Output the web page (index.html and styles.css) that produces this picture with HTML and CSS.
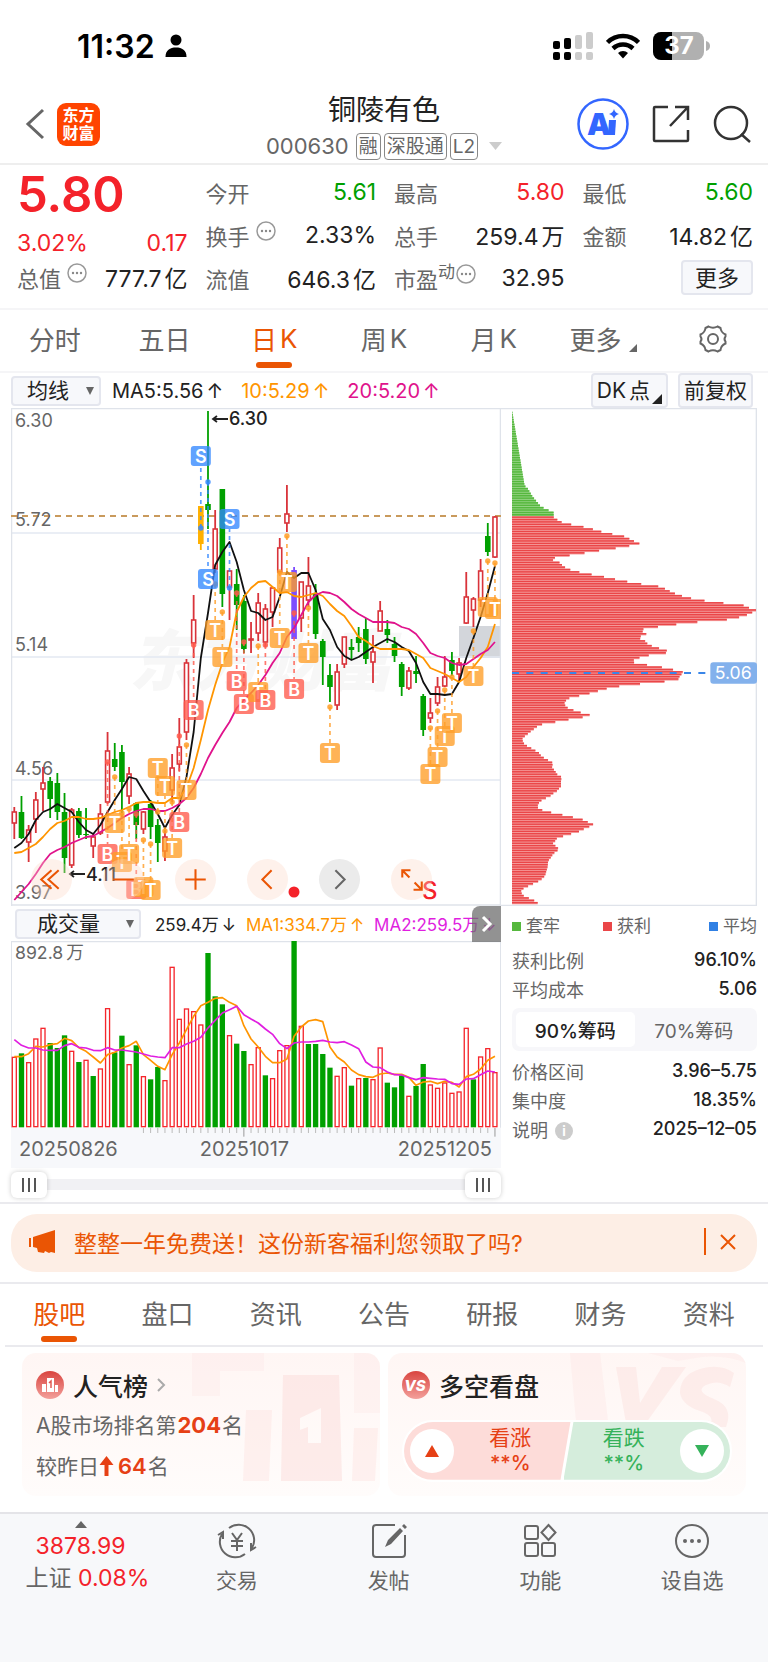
FILE: index.html
```html
<!DOCTYPE html>
<html lang="zh">
<head>
    <meta charset="UTF-8">
    <meta name="viewport" content="width=device-width, initial-scale=1.0">
    <title>铜陵有色 000630</title>
    <link rel="stylesheet" href="styles.css">
</head>
<body>
    <div class="status-bar">
        <div class="status-time">
            <span>11:32</span>
            <svg width="22" height="24" viewBox="0 0 22 24"><circle cx="11" cy="6" r="5.5"/><path d="M0.5 23C0.5 16 5 13.5 11 13.5S21.500 16 21.500 23Z"/></svg>
        </div>
        <div class="status-icons">
            <svg width="40" height="28" viewBox="0 0 40 28">
                <rect x="0" y="9" width="7" height="8" rx="2"/><rect x="11" y="6" width="7" height="11" rx="2"/>
                <rect x="22" y="3" width="7" height="14" rx="2" fill="#ccc"/><rect x="33" y="0" width="7" height="17" rx="2" fill="#ccc"/>
                <rect x="0" y="20" width="7" height="8" rx="2"/><rect x="11" y="20" width="7" height="8" rx="2"/>
                <rect x="22" y="20" width="7" height="8" rx="2" fill="#ccc"/><rect x="33" y="20" width="7" height="8" rx="2" fill="#ccc"/>
            </svg>
            <svg width="34" height="26" viewBox="0 0 34 26" fill="none" stroke="#000" stroke-width="4.500">
                <path d="M1.500 9.500a22 22 0 0 1 31 0M7 15.500a14.500 14.500 0 0 1 20 0"/><path d="M17 25.500l-5-5.500a7 7 0 0 1 10 0z" fill="#000" stroke="none"/>
            </svg>
            <svg width="57" height="28" viewBox="0 0 57 28">
                <clipPath id="battery"><rect width="51" height="28" rx="8"/></clipPath>
                <g clip-path="url(#battery)"><rect width="51" height="28" fill="#b0b0b0"/><rect width="19" height="28"/></g>
                <path d="M53 9q4 1 4 5t-4 5z" fill="#b0b0b0"/>
                <text x="26" y="22" text-anchor="middle" class="battery-text">37</text>
            </svg>
        </div>
    </div>

    <header class="header">
        <div class="header-left">
            <button class="icon-btn" aria-label="返回"><svg width="20" height="32" viewBox="0 0 20 32" fill="none" stroke="#666" stroke-width="3"><path d="M18 2L3 16l15 14"/></svg></button>
            <div class="logo">东方<br>财富</div>
        </div>
        <div class="header-title">
            <h1>铜陵有色</h1>
            <div class="code">
                <span class="code-num">000630</span>
                <span class="tag">融</span><span class="tag">深股通</span><span class="tag">L2</span>
                <svg class="code-arrow" width="13" height="8" viewBox="0 0 13 8"><path d="M0 0h13L6.500 8z" fill="#ccc"/></svg>
            </div>
        </div>
        <div class="header-right">
            <button class="icon-btn" aria-label="AI">
                <svg width="52" height="52" viewBox="0 0 52 52">
                    <circle cx="26" cy="26" r="24.500" fill="#fff" stroke="#36f" stroke-width="2.500"/>
                    <text x="10" y="37" class="ai-text">A</text>
                    <path d="M32 22h7l-1 15h-7z" fill="#36f"/>
                    <path d="M37 11q1 4 5 5q-4 1-5 5q-1-4-5-5q4-1 5-5z" fill="#36f"/>
                </svg>
            </button>
            <button class="icon-btn" aria-label="分享"><svg width="38" height="38" viewBox="0 0 38 38" fill="none" stroke="#333" stroke-width="2.500"><path d="M16 2H3a1 1 0 0 0-1 1v32a1 1 0 0 0 1 1h32a1 1 0 0 0 1-1V25M23 2h13v13M36 2L18 21"/></svg></button>
            <button class="icon-btn" aria-label="搜索"><svg width="38" height="38" viewBox="0 0 38 38" fill="none" stroke="#333" stroke-width="2.500"><circle cx="18" cy="18" r="16"/><path d="M28 29l9 8"/></svg></button>
        </div>
    </header>

    <section class="quote">
        <div class="quote-col price-col">
            <div class="price">5.80</div>
            <div class="item up"><span>3.02%</span><span>0.17</span></div>
            <div class="item"><span class="label">总值<svg class="more-dot" viewBox="0 0 20 20"><use href="#dots"/></svg></span><span>777.7<em>亿</em></span></div>
        </div>
        <div class="quote-col">
            <div class="item"><span class="label">今开</span><span class="down">5.61</span></div>
            <div class="item"><span class="label">换手<svg class="more-dot" viewBox="0 0 20 20"><use href="#dots"/></svg></span><span>2.33%</span></div>
            <div class="item"><span class="label">流值</span><span>646.3<em>亿</em></span></div>
        </div>
        <div class="quote-col">
            <div class="item"><span class="label">最高</span><span class="up">5.80</span></div>
            <div class="item"><span class="label">总手</span><span>259.4<em>万</em></span></div>
            <div class="item"><span class="label">市盈<small>动</small><svg class="more-dot tight" viewBox="0 0 20 20"><use href="#dots"/></svg></span><span>32.95</span></div>
        </div>
        <div class="quote-col">
            <div class="item"><span class="label">最低</span><span class="down">5.60</span></div>
            <div class="item"><span class="label">金额</span><span>14.82<em>亿</em></span></div>
            <div class="item end"><button class="box-btn more-btn">更多</button></div>
        </div>
    </section>

    <nav class="tabs period-tabs">
        <button class="tab">分时</button>
        <button class="tab">五日</button>
        <button class="tab active">日<em>K</em></button>
        <button class="tab">周<em>K</em></button>
        <button class="tab">月<em>K</em></button>
        <button class="tab">更多<svg class="corner" width="8" height="8" viewBox="0 0 8 8"><path d="M8 0v8H0z" fill="#666"/></svg></button>
        <button class="tab" aria-label="设置"><svg width="30" height="30" viewBox="0 0 30 30" fill="none" stroke="#666" stroke-width="2"><path d="M10.500 2.500q4.500 2.500 9 0l3 1.500q.5 4.500 5 6.500v2q-2 2.500 0 5v2q-4.500 2-5 6.500l-3 1.500q-4.500-2.500-9 0l-3-1.500q-.5-4.500-5-6.500v-2q2-2.500 0-5v-2q4.500-2 5-6.500z"/><circle cx="15" cy="15" r="5"/></svg></button>
    </nav>

    <div class="ma-bar">
        <div class="select-wrap ma-select"><select aria-label="指标"><option>均线</option></select></div>
        <span>MA5:5.56<em>↑</em></span>
        <span class="c-orange">10:5.29<em>↑</em></span>
        <span class="c-pink">20:5.20<em>↑</em></span>
        <div class="ma-btns">
            <button class="box-btn dk-btn">DK<em>点</em><svg class="dk-corner" width="10" height="10" viewBox="0 0 10 10"><path d="M10 0v10H0z" fill="#222"/></svg></button>
            <button class="box-btn">前复权</button>
        </div>
    </div>

    <main class="charts">
        <div class="left">
            <div class="kline">
                <svg id="kline" viewBox="0 0 490 498"></svg>
                <div class="chart-tools">
                    <button aria-label="最左"><svg viewBox="0 0 40 40"><path d="M20 11l-10 9 10 9M27 11l-10 9 10 9"/></svg></button>
                    <button aria-label="缩小"><svg viewBox="0 0 40 40"><path d="M10 20h20"/></svg></button>
                    <button aria-label="放大"><svg viewBox="0 0 40 40"><path d="M10 20h20M20 10v20"/></svg></button>
                    <button aria-label="左移"><svg viewBox="0 0 40 40"><path d="M24 11l-9 9 9 9"/></svg></button>
                    <button aria-label="右移" class="gray"><svg viewBox="0 0 40 40"><path d="M16 11l9 9-9 9"/></svg></button>
                    <button aria-label="全屏"><svg viewBox="0 0 40 40"><path d="M11 18v-7h8M11 11l7 7M30 22v8h-8M30 30l-7-7"/></svg></button>
                </div>
            </div>
            <div class="vol-bar">
                <div class="select-wrap vol-select"><select aria-label="副图指标"><option>成交量</option></select></div>
                <span>259.4万<em>↓</em></span>
                <span class="c-orange">MA1:334.7万<em>↑</em></span>
                <span class="c-purple">MA2:259.5万<em>↓</em></span>
                <button class="vol-next" aria-label="展开"><svg width="12" height="18" viewBox="0 0 12 18" fill="none" stroke="#fff" stroke-width="3"><path d="M2 2l7 7-7 7"/></svg></button>
            </div>
            <svg id="volume" viewBox="0 0 1470 560"></svg>
            <div class="axis">
                <svg id="ticks" viewBox="0 0 1470 27"></svg>
                <div class="axis-labels"><span>20250826</span><span>20251017</span><span>20251205</span></div>
            </div>
            <div class="range">
                <input type="range" min="0" max="100" value="0" aria-label="起始日期">
                <input type="range" min="0" max="100" value="100" aria-label="结束日期">
            </div>
        </div>
        <div class="right">
            <svg id="chips" viewBox="0 0 768 1494"></svg>
            <div class="chip-info">
                <div class="legend"><span class="green">套牢</span><span class="red">获利</span><span class="blue">平均</span></div>
                <div class="row"><span>获利比例</span><b>96.10%</b></div>
                <div class="row"><span>平均成本</span><b>5.06</b></div>
                <div class="segment"><button class="on">90%筹码</button><button>70%筹码</button></div>
                <div class="row"><span>价格区间</span><b>3.96–5.75</b></div>
                <div class="row"><span>集中度</span><b>18.35%</b></div>
                <div class="row"><span>说明<i class="info">i</i></span><b>2025–12–05</b></div>
            </div>
        </div>
    </main>

    <div class="banner-wrap">
        <div class="banner">
            <svg width="28" height="24" viewBox="0 0 28 24" fill="#ea5504"><path d="M0 8h2v9H0zM4 7L26 0v23l-4-1-2 1-4-2-1 2-6-1-1-4-4-1z"/></svg>
            <span>整整一年免费送！这份新客福利您领取了吗?</span>
            <button class="banner-close" aria-label="关闭"><svg width="16" height="16" viewBox="0 0 16 16" fill="none" stroke="#ea5504" stroke-width="2"><path d="M1 1l14 14M15 1L1 15"/></svg></button>
        </div>
    </div>

    <nav class="tabs info-tabs">
        <button class="tab active">股吧</button>
        <button class="tab">盘口</button>
        <button class="tab">资讯</button>
        <button class="tab">公告</button>
        <button class="tab">研报</button>
        <button class="tab">财务</button>
        <button class="tab">资料</button>
    </nav>

    <section class="cards">
        <div class="card">
            <svg class="card-bg" viewBox="0 0 188 143" fill="#fbdcda">
                <path d="M0 0h72v18H28v25H0z" opacity=".2"/><path d="M54 57h26l-3 71H51zM162 75h24l-3 53h-23z" opacity=".35"/>
                <path d="M91 22h56l3 106h-61zM108 65v12l8-3v16h13V55z" fill-rule="evenodd" opacity=".5"/><path d="M162 0h26v60h-26z" opacity=".2"/>
            </svg>
            <h2>
                <svg width="28" height="28" viewBox="0 0 28 28"><circle cx="14" cy="14" r="14" fill="url(#redGrad)"/><path d="M6 13h4v8H6zM11 7h7v14h-7zM19 14h3v7h-3z" fill="#fff"/><path d="M13 12l2-2v7" stroke="#e05a52" fill="none" stroke-width="1.500"/></svg>
                人气榜
                <svg width="9" height="14" viewBox="0 0 9 14" fill="none" stroke="#aaa" stroke-width="2"><path d="M1 1l6 6-6 6"/></svg>
            </h2>
            <p>A股市场排名第<b>204</b>名</p>
            <p>较昨日<svg width="15" height="20" viewBox="0 0 14 20"><path d="M7 0l7 9H9v11H5V9H0z" fill="#e64015"/></svg><b class="rise">64</b>名</p>
        </div>
        <div class="card">
            <svg class="card-bg" viewBox="0 0 188 143" fill="#fbdcda">
                <path d="M12 0h30l8 68H18z" opacity=".25"/>
                <path d="M58 14h20l4 36 22-36h24L88 70H68z" opacity=".4"/>
                <path d="M176 20q-14-10-34-4t-20 24q2 12 20 18t8 16h18q8-20-12-28t-8-14 24 2z" opacity=".4"/>
                <path d="M90 0h98v10q-20-8-44-6l-24 4z" opacity=".2"/>
            </svg>
            <h2>
                <svg width="28" height="28" viewBox="0 0 28 28"><circle cx="14" cy="14" r="14" fill="url(#redGrad)"/><text x="13" y="20" text-anchor="middle" class="vs-text">VS</text></svg>
                多空看盘
            </h2>
            <div class="vote">
                <button class="vote-up"><i><svg width="14" height="12" viewBox="0 0 14 12"><path d="M7 0l7 12H0z" fill="#e64015"/></svg></i><span>看涨<br><small>**%</small></span></button>
                <button class="vote-down"><span>看跌<br><small>**%</small></span><i><svg width="14" height="12" viewBox="0 0 14 12"><path d="M0 0h14L7 12z" fill="#35b25a"/></svg></i></button>
            </div>
        </div>
    </section>

    <footer class="bottom-bar">
        <a class="index" href="#">
            <svg width="12" height="7" viewBox="0 0 12 7"><path d="M6 0l6 7H0z" fill="#666"/></svg>
            <span class="up">3878.99</span>
            <span class="index-name">上证 <span class="up">0.08%</span></span>
        </a>
        <a href="#"><svg viewBox="0 0 40 36" width="40" height="36"><path d="M12 5a15.500 15.500 0 0 1 23 20M28 31a15.500 15.500 0 0 1-23-20M1 12l5-3v7M39 24l-5 3v-7M15 10l5 7 5-7M20 17v11M14 18h12M14 23h12"/></svg>交易</a>
        <a href="#"><svg viewBox="0 0 36 36" width="36" height="36"><path d="M24 2H5a3 3 0 0 0-3 3v26a3 3 0 0 0 3 3h26a3 3 0 0 0 3-3V12"/><path d="M14 24l3-7L29 5l3 3-12 13zM31 3l2-2 3 3-2 2z" fill="#666" stroke="none"/></svg>发帖</a>
        <a href="#"><svg viewBox="0 0 36 36" width="36" height="36"><rect x="3" y="3" width="13" height="13" rx="2"/><rect x="3" y="20" width="13" height="13" rx="2"/><rect x="20" y="20" width="13" height="13" rx="2"/><path d="M26.500 2l7 7.500-7 7.500-7-7.500z"/></svg>功能</a>
        <a href="#"><svg viewBox="0 0 36 36" width="36" height="36"><circle cx="18" cy="18" r="16"/><g fill="#666" stroke="none"><circle cx="11" cy="18" r="2"/><circle cx="18" cy="18" r="2"/><circle cx="25" cy="18" r="2"/></g></svg>设自选</a>
    </footer>

    <svg class="defs" width="0" height="0">
        <linearGradient id="redGrad" x1="0" y1="0" x2="0" y2="1"><stop offset="0" stop-color="#d9443f"/><stop offset="1" stop-color="#f3a09b"/></linearGradient>
        <g id="dots"><circle cx="10" cy="10" r="9" fill="none" stroke="#999" stroke-width="1.500"/><g fill="#888"><circle cx="6" cy="10" r="1.200"/><circle cx="10" cy="10" r="1.200"/><circle cx="14" cy="10" r="1.200"/></g></g>
    </svg>
    <script src="chart.js"></script>
</body>
</html>
```

FILE: styles.css
```css
* {
    box-sizing: border-box;
}
body {
    margin: 0;
    font-family: Inter, "Noto Sans CJK SC", sans-serif;
    font-size: 22px;
    color: #222;
    background: #fff;
}
button, select {
    font-family: inherit;
    color: inherit;
    border: none;
    background: none;
    padding: 0;
    cursor: pointer;
}
h1, h2, p {
    margin: 0;
}
svg {
    flex: none;
}
em {
    margin-left: 3px;
    font-style: normal;
}
.up { color: #f4222a; }
.down { color: #00a000; }
.c-orange { color: #ff9500; }
.c-pink { color: #e0138c; }
.c-purple { color: #e01ee0; }

/* 状态栏 */
.status-bar {
    display: flex;
    justify-content: space-between;
    align-items: center;
    height: 92px;
    padding: 0 58px 0 77px;
}
.status-time {
    display: flex;
    align-items: center;
    gap: 10px;
    font-size: 32px;
    font-weight: 600;
    color: #000;
}
.status-icons {
    display: flex;
    align-items: center;
    gap: 13px;
}
.battery-text {
    font-size: 24px;
    font-weight: 700;
    fill: #fff;
}

/* 头部 */
.header {
    display: grid;
    grid-template-columns: 1fr auto 1fr;
    align-items: center;
    height: 73px;
    padding: 0 17px;
    border-bottom: 2px solid #eee;
}
.header-left, .header-right {
    display: flex;
    align-items: center;
    gap: 12px;
    padding: 0 0 8px 8px;
}
.header-right {
    justify-content: flex-end;
    gap: 23px;
}
.icon-btn {
    display: flex;
}
.logo {
    width: 43px;
    height: 43px;
    padding-top: 3px;
    border-radius: 9px;
    background: #ff4400;
    color: #fff;
    font-size: 16px;
    font-weight: 700;
    line-height: 18px;
    text-align: center;
}
.header-title {
    text-align: center;
}
.header-title h1 {
    font-size: 28px;
    font-weight: 400;
    line-height: 36px;
}
.code {
    display: flex;
    align-items: center;
    gap: 3px;
    height: 36px;
    font-size: 22px;
    color: #666;
}
.code-num {
    margin-right: 4px;
}
.tag {
    height: 27px;
    padding: 0 2px;
    border: 1px solid #888;
    border-radius: 4px;
    font-size: 19px;
    line-height: 25px;
}
.code-arrow {
    margin-left: 8px;
}
.ai-text {
    font-size: 30px;
    font-weight: 900;
    fill: #3366ff;
}

/* 行情 */
.quote {
    display: grid;
    grid-template-columns: repeat(4, 1fr);
    column-gap: 18px;
    height: 145px;
    padding: 5px 15px 0 17px;
    border-bottom: 2px solid #f5f5f7;
}
.item {
    display: flex;
    justify-content: space-between;
    align-items: center;
    height: 43px;
    font-size: 23px;
}
.price-col {
    display: grid;
    grid-template-rows: 50px 46px 22px;
}
.price-col .item {
    height: auto;
}
.price {
    font-size: 49px;
    font-weight: 600;
    line-height: 50px;
    color: #f4222a;
}
.label {
    display: flex;
    align-items: center;
    font-size: 22px;
    color: #666;
}
.label small {
    align-self: flex-start;
    font-size: 17px;
    line-height: 20px;
}
.more-dot {
    width: 20px;
    height: 20px;
    margin: 0 0 8px 6px;
}
.more-dot.tight {
    margin-left: 1px;
}
.item.end {
    justify-content: flex-end;
}
.box-btn {
    height: 35px;
    padding: 0 4px;
    border: 2px solid #e4e6ee;
    border-radius: 4px;
    background: #f7f8fb;
    font-size: 21px;
    line-height: 30px;
}
.more-btn {
    padding: 0 12px;
    font-size: 22px;
}

/* 标签页 */
.tabs {
    display: grid;
    grid-template-columns: repeat(7, 1fr);
    border-bottom: 2px solid #f5f5f7;
}
.tab {
    position: relative;
    display: flex;
    justify-content: center;
    align-items: center;
    height: 61px;
    padding-bottom: 4px;
    font-size: 26px;
    color: #666;
}
.tab.active {
    color: #ea5504;
}
.tab.active::after {
    content: "";
    position: absolute;
    bottom: 3px;
    left: 50%;
    width: 36px;
    height: 6px;
    margin-left: -18px;
    border-radius: 3px;
    background: #ea5504;
}
.corner {
    align-self: flex-end;
    margin: 0 0 15px 8px;
}

/* 均线 */
.ma-bar {
    display: flex;
    align-items: center;
    gap: 18px;
    height: 35px;
    padding: 0 15px 0 11px;
    font-size: 20px;
}
.select-wrap {
    position: relative;
    border: 2px solid #e4e6ee;
    border-radius: 4px;
    background: #f7f8fb;
}
.select-wrap::after {
    content: "";
    position: absolute;
    right: 5px;
    top: 9px;
    border: 4px solid transparent;
    border-top: 8px solid #666;
    border-bottom: 0;
    pointer-events: none;
}
.select-wrap select {
    appearance: none;
    width: 100%;
    height: 26px;
    font-size: 21px;
    line-height: 26px;
}
.ma-select {
    width: 90px;
    margin-right: -7px;
}
.ma-select select {
    padding-left: 14px;
}
.ma-btns {
    display: flex;
    gap: 10px;
    margin-left: auto;
}
.dk-btn {
    display: flex;
    align-items: center;
}
.dk-corner {
    align-self: flex-end;
    margin: 0 0 2px 2px;
}

/* 图表 */
.charts {
    display: grid;
    grid-template-columns: 490fr 256fr;
    margin: 0 11px;
}
.left, .right {
    min-width: 0;
}
.left > svg, .kline > svg, .right > svg, .axis > svg {
    display: block;
    width: 100%;
}
.kline {
    position: relative;
}
.chart-tools {
    position: absolute;
    left: 20px;
    bottom: 6px;
    display: flex;
    gap: 31px;
}
.chart-tools button {
    width: 41px;
    height: 41px;
    border-radius: 50%;
    background: rgba(252, 216, 198, 0.35);
}
.chart-tools button.gray {
    background: #ebebeb;
}
.chart-tools svg {
    display: block;
    fill: none;
    stroke: #ea5504;
    stroke-width: 2;
}
.chart-tools .gray svg {
    stroke: #666;
}
.axis-text {
    font-size: 18px;
    fill: #666;
}
.note-text {
    font-size: 18px;
    font-weight: 500;
    fill: #222;
}
.mark-text {
    font-size: 18px;
    font-weight: 600;
    fill: #fff;
    text-anchor: middle;
}
.s-text {
    font-size: 24px;
    font-weight: 500;
    fill: #f4222a;
}
.watermark {
    font-family: "Noto Sans CJK SC", sans-serif;
    font-size: 66px;
    font-weight: 900;
    font-style: italic;
    fill: #f7f7f7;
}
.vol-bar {
    position: relative;
    display: flex;
    align-items: center;
    gap: 10px;
    height: 35px;
    padding-left: 4px;
    font-size: 17px;
    white-space: nowrap;
}
.vol-select {
    width: 126px;
    margin-right: 4px;
}
.vol-select select {
    padding-left: 20px;
}
.vol-next {
    position: absolute;
    top: 0;
    right: 0;
    display: flex;
    justify-content: center;
    align-items: center;
    width: 29px;
    height: 36px;
    border-radius: 8px 0 0 0;
    background: rgba(110, 110, 110, 0.75);
}
.max-text {
    font-size: 53px;
    fill: #666;
}
.axis {
    height: 40px;
    background: #f7f8fb;
}
.axis-labels {
    display: grid;
    grid-template-columns: 181fr auto 203fr;
    padding: 0 9px 0 8px;
    font-size: 20px;
    line-height: 24px;
    color: #666;
}
.axis-labels :last-child {
    text-align: right;
}
.range {
    position: relative;
    height: 34px;
}
.range::before {
    content: "";
    position: absolute;
    left: 0;
    right: 0;
    top: 11px;
    height: 11px;
    background: #f1f1f4;
}
.range input {
    position: absolute;
    left: 0;
    top: 4px;
    width: 100%;
    height: 26px;
    margin: 0;
    appearance: none;
    background: none;
    pointer-events: none;
}
.range input::-webkit-slider-thumb {
    appearance: none;
    width: 36px;
    height: 26px;
    border-radius: 6px;
    background:
        linear-gradient(#555, #555) 11px 6px / 2px 14px no-repeat,
        linear-gradient(#555, #555) 17px 6px / 2px 14px no-repeat,
        linear-gradient(#555, #555) 23px 6px / 2px 14px no-repeat,
        #fff;
    box-shadow: 0 0 5px rgba(0, 0, 0, 0.2);
    pointer-events: auto;
}

/* 筹码 */
.chip-text {
    font-size: 53px;
    fill: #fff;
}
.chip-info {
    padding: 3px 0 0 11px;
    font-size: 18px;
    color: #666;
}
.row {
    display: flex;
    justify-content: space-between;
    align-items: center;
    height: 29px;
}
.legend {
    display: grid;
    grid-template-columns: 91fr 106fr auto;
    align-items: center;
    height: 31px;
    margin-bottom: 5px;
    font-size: 17px;
}
.legend span::before {
    content: "";
    display: inline-block;
    width: 9px;
    height: 9px;
    margin-right: 5px;
    vertical-align: 1px;
}
.legend .green::before { background: #56b83e; }
.legend .red::before { background: #ea4648; }
.legend .blue::before { background: #3080e4; }
.row b {
    font-weight: 500;
    color: #222;
}
.info {
    display: inline-block;
    width: 18px;
    height: 18px;
    margin-left: 7px;
    border-radius: 50%;
    background: #ccc;
    color: #fff;
    font-size: 13px;
    font-style: normal;
    font-weight: 700;
    line-height: 18px;
    text-align: center;
    vertical-align: 1px;
}
.segment {
    display: flex;
    height: 43px;
    margin: 5px 0;
    padding: 4px;
    border-radius: 7px;
    background: #f7f7fa;
}
.segment button {
    flex: 1;
    border-radius: 5px;
    font-size: 19px;
}
.segment .on {
    background: #fff;
    color: #222;
    font-weight: 500;
}

/* 活动条 */
.banner-wrap {
    padding: 10px 11px;
    border-top: 2px solid #eaeaee;
    border-bottom: 2px solid #eaeaee;
}
.banner {
    display: flex;
    align-items: center;
    gap: 17px;
    height: 58px;
    padding: 0 21px 2px 18px;
    border-radius: 26px;
    background: #fdeee5;
    font-size: 23px;
    color: #ea5504;
}
.banner-close {
    display: flex;
    align-items: center;
    height: 27px;
    margin-left: auto;
    padding-left: 14px;
    border-left: 2px solid #ea5504;
}
.info-tabs {
    margin: 0 5px;
    border-color: #eaeaee;
}

/* 卡片 */
.cards {
    display: grid;
    grid-template-columns: 1fr 1fr;
    gap: 8px;
    padding: 6px 22px 16px;
}
.card {
    position: relative;
    height: 143px;
    padding: 12px 14px 0;
    border-radius: 14px;
    background: linear-gradient(#fff6f4, #fffcfb);
    overflow: hidden;
}
.card-bg {
    position: absolute;
    top: 0;
    right: 0;
    width: 188px;
    height: 143px;
}
.card h2 {
    position: relative;
    display: flex;
    align-items: center;
    gap: 9px;
    height: 40px;
    font-size: 25px;
    font-weight: 500;
}
.card p {
    position: relative;
    font-size: 21px;
    line-height: 40px;
    color: #666;
}
.card p b {
    margin: 0 1px;
    font-size: 22px;
    color: #e64015;
}
.card p .rise {
    margin-left: 4px;
    font-weight: 600;
}
.card p svg {
    vertical-align: -2px;
}
.vs-text {
    font-size: 15px;
    font-weight: 800;
    font-style: italic;
    fill: #fff;
}
.vote {
    position: relative;
    display: flex;
    height: 62px;
    margin: 15px 0 0;
    border: 2px solid #fff;
    border-radius: 31px;
    background: #fff;
    overflow: hidden;
}
.vote button {
    display: flex;
    flex: 1;
    align-items: center;
    font-size: 21px;
    line-height: 25px;
}
.vote span {
    flex: 1;
}
.vote small {
    font-size: 20px;
    font-weight: 500;
}
.vote i {
    display: flex;
    justify-content: center;
    align-items: center;
    width: 44px;
    height: 44px;
    margin: 0 6px;
    border-radius: 50%;
    background: #fff;
}
.vote .vote-up {
    padding-right: 10px;
    background: #fddcd9;
    color: #e64015;
    clip-path: polygon(0 0, 100% 0, 94% 100%, 0 100%);
}
.vote .vote-down {
    margin-left: -7px;
    padding-left: 10px;
    background: #d5eddc;
    color: #35b25a;
    clip-path: polygon(6% 0, 100% 0, 100% 100%, 0 100%);
}

/* 底部 */
.bottom-bar {
    display: grid;
    grid-template-columns: 161px repeat(4, 1fr);
    height: 150px;
    border-top: 2px solid #e4e4e8;
    background: #f7f8fa;
}
.bottom-bar a {
    display: flex;
    flex-direction: column;
    align-items: center;
    gap: 6px;
    padding-top: 9px;
    color: #666;
    font-size: 21px;
    line-height: 32px;
    text-decoration: none;
}
.bottom-bar a > svg {
    fill: none;
    stroke: #666;
    stroke-width: 2;
}
.bottom-bar .index {
    gap: 0;
    padding-top: 7px;
    font-size: 23px;
}
.bottom-bar .index > svg {
    stroke: none;
    margin-bottom: 2px;
}
.index-name {
    padding-left: 14px;
    white-space: nowrap;
}
.defs {
    position: absolute;
}
```

FILE: chart.js
```js
const RED = '#d9333a';
const GREEN = '#00a000';
const STEP = 7.174;
const px = i => 3.3 + STEP * i;

// 最高、最低、实体上沿、实体下沿、颜色 (r红 g绿 y黄 p紫)
const candles = [
    [399,431,404,415,'r'], [388,431,404,430,'g'], [417,454,422,434,'r'], [384,425,392,411,'r'],
    [359,403,375,381,'r'], [369,410,373,391,'g'], [365,412,375,404,'g'], [385,465,404,450,'g'],
    [400,460,402,457,'r'], [400,430,403,427,'g'], [400,431,426,427,'g'], [425,450,429,438,'r'],
    [396,427,406,425,'r'], [324,396,343,394,'r'], [335,363,351,359,'g'], [337,409,344,374,'g'],
    [359,396,366,388,'r'], [394,431,395,417,'g'], [403,426,404,421,'r'], [392,431,396,419,'g'],
    [411,454,417,435,'g'], [422,453,429,443,'r'], [346,394,360,382,'r'], [310,363,339,356,'r'],
    [251,332,255,324,'r'], [187,250,212,235,'r'], [98,142,98,136,'y'], [3,121,96,102,'g'],
    [102,165,121,161,'r'], [81,199,81,186,'g'], [162,212,163,179,'r'], [161,222,176,197,'g'],
    [187,245,193,241,'g'], [214,245,231,232,'r'], [185,233,195,225,'r'], [196,239,201,234,'r'],
    [179,219,180,204,'r'], [130,164,140,164,'r'], [77,124,106,115,'r'], [159,231,162,231,'p'],
    [174,224,174,210,'r'], [149,199,178,192,'r'], [176,231,186,226,'g'], [231,277,233,249,'g'],
    [256,294,267,279,'g'], [256,302,264,297,'r'], [229,260,229,256,'r'], [231,252,239,242,'g'],
    [219,244,229,235,'g'], [210,256,221,251,'g'], [227,275,244,254,'r'], [193,223,203,223,'r'],
    [212,235,221,227,'g'], [229,254,236,248,'g'], [254,288,256,279,'g'], [259,282,263,280,'r'],
    [248,275,263,266,'g'], [286,328,288,322,'g'], [290,315,305,310,'r'], [269,298,279,295,'r'],
    [248,279,269,278,'r'], [244,268,252,263,'g'], [250,274,255,266,'r'], [164,216,189,215,'r'],
    [189,219,191,202,'r'], [151,199,163,192,'r'], [115,148,128,144,'g'], [108,150,109,149,'r']
];

const ma5 = [440,435,426,412,404,401,396,400,404,414,422,426,417,404,392,381,369,371,383,394,406,420,407,397,369,324,250,205,157,144,134,154,182,203,205,212,209,189,164,170,165,165,182,211,222,239,248,252,249,244,239,235,231,234,239,243,255,274,286,286,287,286,274,250,230,209,185,158];
const ma10 = [445,444,440,436,429,421,415,413,409,409,411,411,410,407,404,402,399,395,394,394,395,395,390,390,380,360,332,302,277,255,239,204,189,180,174,173,179,185,184,188,189,187,185,188,196,203,208,218,229,233,238,241,241,241,241,242,246,250,260,263,266,270,274,269,259,250,239,216];
const ma20 = [492,484,476,466,455,446,442,439,435,432,429,428,424,420,415,410,406,403,401,401,403,403,400,396,390,380,366,350,337,325,314,300,292,285,277,267,255,245,229,220,207,194,187,184,185,188,194,201,206,210,214,214,214,215,219,221,226,235,245,248,250,255,257,256,251,246,242,234];

// 类型、K线序号、圆点y、标记y
const marks = [
    ['S',26,120,48], ['S',27,74,171], ['S',30,180,111], ['T',28,176,222], ['T',29,204,249],
    ['B',31,185,273], ['B',32,234,296], ['B',25,237,302], ['T',14,369,415], ['B',13,354,446],
    ['T',15,405,454], ['T',16,401,446], ['B',17,406,481], ['T',18,432,479], ['T',19,436,482],
    ['T',20,404,360], ['T',21,423,378], ['T',22,394,440], ['B',23,328,414], ['T',24,337,382],
    ['T',34,238,284], ['B',35,237,292], ['T',37,164,230], ['T',38,128,174], ['B',39,205,281],
    ['T',41,200,245], ['T',44,299,345], ['T',58,320,366], ['T',59,303,349], ['T',60,282,328],
    ['T',61,269,315], ['T',64,223,268], ['T',66,153,199], ['T',67,155,201]
];
const markColor = { S: '#3388ff', T: '#ff9d26', B: '#ff5a4c' };

function polyline(data, fx, color, width) {
    const pts = data.map((v, i) => fx(i) + ',' + v).join(' ');
    return `<polyline points="${pts}" fill="none" stroke="${color}" stroke-width="${width}" stroke-linejoin="round"/>`;
}

function drawKline() {
    let s = '';
    s += '<text x="118" y="277" class="watermark">东方财富</text>';
    s += '<rect x="448" y="218" width="42" height="32" fill="#d3d6db"/>';
    [125, 249, 372].forEach(y => {
        s += `<path d="M0 ${y}H490" stroke="#e3e9f2" stroke-width="1.5"/>`;
    });
    s += '<path d="M0 .5H490M0 497H490M.5 0V498M489.500 0V498" stroke="#dfe3ea" stroke-width="1.5" fill="none"/>';
    s += '<path d="M0 108H490" stroke="#c99a5c" stroke-width="2" stroke-dasharray="6 5"/>';
    [['6.30', 19], ['5.72', 118], ['5.14', 243], ['4.56', 367], ['3.97', 491]].forEach(([t, y]) => {
        s += `<text x="4" y="${y}" class="axis-text">${t}</text>`;
    });
    candles.forEach(([h, l, t, b, c], i) => {
        const x = px(i);
        const color = { r: RED, g: GREEN, y: '#ffb000', p: '#7d4dff' }[c];
        if (c === 'r') {
            s += `<path d="M${x} ${h}V${t}M${x} ${b}V${l}" stroke="${color}" stroke-width="1.800"/>`;
            s += `<rect x="${x - 2}" y="${t}" width="4" height="${b - t}" fill="#fff" stroke="${color}" stroke-width="1.600"/>`;
        } else {
            s += `<path d="M${x} ${h}V${l}" stroke="${color}" stroke-width="1.800"/>`;
            s += `<rect x="${x - 2.8}" y="${t}" width="5.600" height="${b - t}" fill="${color}"/>`;
        }
    });
    s += polyline(ma5, px, '#111', 1.8);
    s += polyline(ma10, px, '#ff9500', 1.8);
    s += polyline(ma20, px, '#e0138c', 1.8);
    marks.forEach(([type, i, dot, y]) => {
        const x = px(i);
        const color = markColor[type];
        const end = y > dot ? y - 10 : y + 10;
        s += `<path d="M${x} ${dot}V${end}" stroke="${color}" stroke-width="1.700" stroke-dasharray="4 4" opacity=".8"/>`;
        s += `<circle cx="${x}" cy="${dot}" r="2.700" fill="${color}" opacity=".85"/>`;
    });
    marks.forEach(([type, i, dot, y]) => {
        const x = px(i);
        s += `<rect x="${x - 10}" y="${y - 10}" width="20" height="20" rx="3" fill="${markColor[type]}" opacity=".78"/>`;
        s += `<text x="${x}" y="${y + 6.5}" class="mark-text">${type}</text>`;
    });
    s += '<path d="M217 11H203M206 8l-4 3 4 3" stroke="#222" stroke-width="1.800" fill="none"/><text x="218" y="17" class="note-text">6.30</text>';
    s += '<path d="M74 466H60M63 463l-4 3 4 3" stroke="#222" stroke-width="1.800" fill="none"/><text x="75" y="473" class="note-text">4.11</text>';
    s += '<circle cx="283" cy="484" r="5.500" fill="#f4222a"/><text x="411" y="491" class="s-text">S</text>';
    document.getElementById('kline').innerHTML = s;
}

const volumes = [212,222,196,267,299,253,238,276,230,196,203,154,177,358,225,275,190,246,154,144,181,142,482,326,357,349,309,523,393,369,277,251,229,190,241,156,148,232,247,559,305,250,250,220,179,155,181,125,148,148,145,240,134,120,156,95,124,190,129,119,135,104,108,299,144,213,238,166];
const volColor = 'rgrrrgggrgrgrrggrgrggrrrrrrgggrggrrgrrrgrggggrrgrgrrgggrggrrrrrrgrrr';
const vma1 = [471,471,462,440,442,435,432,416,423,444,455,472,490,465,458,445,438,425,465,482,500,510,465,430,390,350,318,308,296,294,308,318,378,418,442,470,489,489,478,410,382,364,360,366,442,472,487,511,525,531,533,523,520,524,524,533,557,547,545,552,545,548,562,531,524,508,482,470];
const vma2 = [420,437,445,445,451,452,452,438,432,443,445,452,453,444,451,451,454,457,463,469,472,474,444,444,433,425,413,385,362,340,330,320,345,358,370,388,404,432,447,430,427,427,425,422,427,429,426,436,447,487,502,504,517,525,526,534,540,534,536,538,539,552,554,538,537,525,514,517];

function drawVolume() {
    const vx = i => px(i) * 3;
    let s = '<path d="M0 2H1470M1 0V560M1469 0V560" stroke="#dfe3ea" stroke-width="4" fill="none"/>';
    s += '<text x="12" y="53" class="max-text">892.8<tspan dx="9">万</tspan></text>';
    volumes.forEach((v, i) => {
        if (volColor[i] === 'r') {
            s += `<rect x="${vx(i) - 6}" y="${561 - v}" width="12" height="${v - 4}" fill="#fff" stroke="#f5262c" stroke-width="4"/>`;
        } else {
            s += `<rect x="${vx(i) - 8}" y="${559 - v}" width="16" height="${v}" fill="${GREEN}"/>`;
        }
    });
    s += polyline(vma1.map(v => v - 124), vx, '#ff9500', 5);
    s += polyline(vma2.map(v => v - 124), vx, '#e01ee0', 5);
    document.getElementById('volume').innerHTML = s;

    let t = '';
    for (let i = 18; i < 68; i++) {
        const long = i === 32 || i === 67;
        t += `<path d="M${vx(i)} 0V${long ? 26 : 15}" stroke="${long ? '#999' : '#bbb'}" stroke-width="3"/>`;
    }
    document.getElementById('ticks').innerHTML = t;
}

// 筹码分布轮廓: y, 宽度
const profile = [
    [36,1],[258,38],[262,45],[290,62],[320,87],[338,125],[352,125],[362,140],[369,154],[376,190],[383,226],[390,250],[397,275],[404,310],[411,345],[418,354],[425,369],[432,385],[439,345],[446,305],[453,255],[460,213],[467,169],[474,126],[481,123],[488,143],[495,150],[502,159],[509,174],[516,200],[523,236],[530,273],[538,310],[545,346],[552,387],[559,438],[566,458],[573,472],[580,487],[587,507],[594,532],[602,577],[608,622],[615,692],[622,706],[630,733],[637,722],[643,711],[651,685],[658,660],[665,568],[672,504],[679,450],[686,397],[693,386],[700,408],[707,390],[714,378],[721,398],[728,402],[736,414],[743,435],[750,458],[757,480],[764,420],[771,390],[778,368],[786,360],[792,382],[799,439],[806,464],[813,507],[820,518],[827,498],[834,507],[842,490],[849,409],[856,350],[862,295],[870,274],[877,240],[884,225],[891,180],[898,165],[905,160],[912,156],[919,162],[926,170],[933,192],[940,213],[947,242],[954,199],[961,158],[968,120],[975,81],[983,72],[990,62],[997,53],[1004,45],[1011,36],[1018,30],[1025,33],[1032,37],[1039,47],[1046,60],[1053,72],[1061,84],[1068,87],[1075,98],[1082,111],[1089,123],[1097,121],[1104,120],[1111,128],[1118,132],[1125,137],[1132,150],[1140,147],[1160,147],[1167,140],[1174,134],[1181,123],[1188,115],[1195,101],[1202,88],[1209,81],[1217,77],[1224,78],[1231,92],[1237,115],[1244,148],[1251,179],[1258,210],[1265,224],[1272,245],[1279,235],[1286,218],[1294,203],[1301,180],[1308,156],[1315,135],[1322,131],[1329,122],[1336,128],[1343,138],[1350,139],[1357,129],[1364,122],[1371,118],[1378,112],[1385,108],[1400,107],[1428,99],[1442,84],[1449,69],[1456,54],[1463,40],[1470,27],[1485,30],[1492,45],[1499,60],[1506,77],[1513,77]
];

function widthAt(y) {
    const k = Math.max(1, profile.findIndex(p => p[0] >= y));
    const [y0, w0] = profile[k - 1];
    const [y1, w1] = profile[k];
    return w0 + (w1 - w0) * (y - y0) / (y1 - y0);
}

function drawChips() {
    let s = '<path d="M0 2H768M0 1492H768M766 0V1494" stroke="#dfe3ea" stroke-width="4" fill="none"/>';
    for (let y = 38; y < 1513; y += 7.14) {
        const w = widthAt(y);
        const green = y < 350;
        s += `<rect x="33" y="${y - 27}" width="${w}" height="7.140" fill="${green ? '#8fd17e' : '#f59a9a'}"/>`;
        s += `<rect x="33" y="${y - 27}" width="${w}" height="4.500" fill="${green ? '#56b83e' : '#ea4648'}"/>`;
    }
    s += '<path d="M33 795H616" stroke="#3a86e8" stroke-width="6" stroke-dasharray="21 22"/>';
    s += '<rect x="628" y="763" width="140" height="64" rx="9" fill="#83b1ec"/>';
    s += '<text x="641" y="814" class="chip-text">5.06</text>';
    document.getElementById('chips').innerHTML = s;
}

drawKline();
drawVolume();
drawChips();
```
